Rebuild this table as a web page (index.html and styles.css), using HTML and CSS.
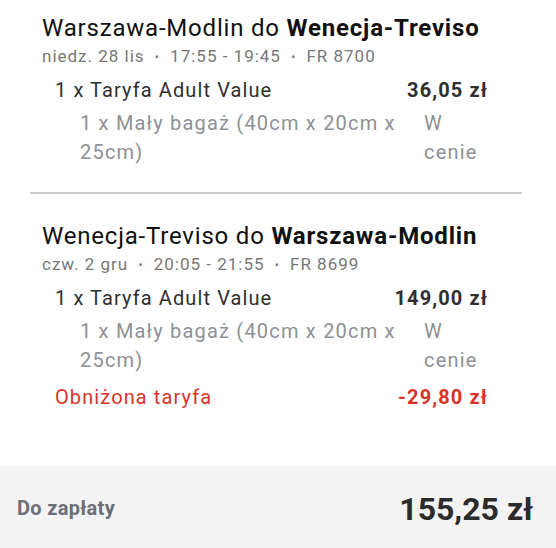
FILE: index.html
```html
<!DOCTYPE html>
<html lang="pl">
<head>
<meta charset="utf-8">
<title>Podsumowanie</title>
<link rel="stylesheet" href="styles.css">
</head>
<body>
<div class="summary">
  <section class="flight">
    <h2 class="route">Warszawa-Modlin do <strong>Wenecja-Treviso</strong></h2>
    <div class="meta">niedz. 28 lis <span class="dot">•</span> 17:55 - 19:45 <span class="dot">•</span> FR 8700</div>
    <div class="row">
      <span class="label">1 x Taryfa Adult Value</span>
      <span class="price">36,05 zł</span>
    </div>
    <div class="sub">
      <span class="sub-label">1 x Mały bagaż (40cm x 20cm x 25cm)</span>
      <span class="sub-value">W cenie</span>
    </div>
  </section>
  <hr class="divider">
  <section class="flight second">
    <h2 class="route">Wenecja-Treviso do <strong>Warszawa-Modlin</strong></h2>
    <div class="meta">czw. 2 gru <span class="dot">•</span> 20:05 - 21:55 <span class="dot">•</span> FR 8699</div>
    <div class="row">
      <span class="label">1 x Taryfa Adult Value</span>
      <span class="price">149,00 zł</span>
    </div>
    <div class="sub">
      <span class="sub-label">1 x Mały bagaż (40cm x 20cm x 25cm)</span>
      <span class="sub-value">W cenie</span>
    </div>
    <div class="row discount">
      <span class="label">Obniżona taryfa</span>
      <span class="price">-29,80 zł</span>
    </div>
  </section>
</div>
<footer class="total">
  <span class="total-label">Do zapłaty</span>
  <span class="total-value">155,25 zł</span>
</footer>
</body>
</html>
```

FILE: styles.css
```css
html, body {
  margin: 0;
  padding: 0;
  background: #ffffff;
}
body {
  font-family: Roboto, "Noto Sans", Arial, sans-serif;
  width: 556px;
  height: 548px;
  display: flex;
  flex-direction: column;
  overflow: hidden;
}
.summary {
  flex: 1;
}
.flight {
  padding: 13px 0 0 42px;
}
.flight.second {
  padding-top: 27px;
}
.route {
  margin: 0;
  font-size: 24px;
  line-height: 31px;
  font-weight: 400;
  letter-spacing: 0.8px;
  color: #111111;
}
.route strong {
  font-weight: 700;
}
.meta {
  font-size: 17px;
  line-height: 24px;
  letter-spacing: 1px;
  color: #777777;
}
.dot {
  display: inline-block;
  margin: 0 5px;
  font-size: 12px;
  vertical-align: 1px;
}
.row {
  display: flex;
  justify-content: space-between;
  margin: 6px 69px 0 13px;
  font-size: 20px;
  line-height: 30px;
  letter-spacing: 1.1px;
  color: #2f2f2f;
}
.price {
  font-weight: 700;
  margin-right: -1px;
}
.sub {
  display: flex;
  gap: 20px;
  margin: 4px 69px 0 38px;
  font-size: 20px;
  line-height: 29px;
  letter-spacing: 1.2px;
  color: #8e9196;
}
.sub-label {
  flex: 1;
}
.sub-value {
  width: 63px;
  flex: none;
}
.discount {
  color: #d8342a;
  margin-top: 7px;
}
.divider {
  border: 0;
  height: 2px;
  background: #c6cacd;
  margin: 25px 34px 0 30px;
}
.total {
  height: 82px;
  flex: none;
  background: #f3f3f3;
  display: flex;
  align-items: center;
  justify-content: space-between;
  padding: 0 23px 0 17px;
}
.total-label {
  font-size: 20px;
  font-weight: 700;
  letter-spacing: 0.3px;
  color: #6c6f76;
  padding-top: 2px;
}
.total-value {
  font-size: 32px;
  font-weight: 700;
  color: #2b2b2b;
  padding-top: 4px;
}
```
